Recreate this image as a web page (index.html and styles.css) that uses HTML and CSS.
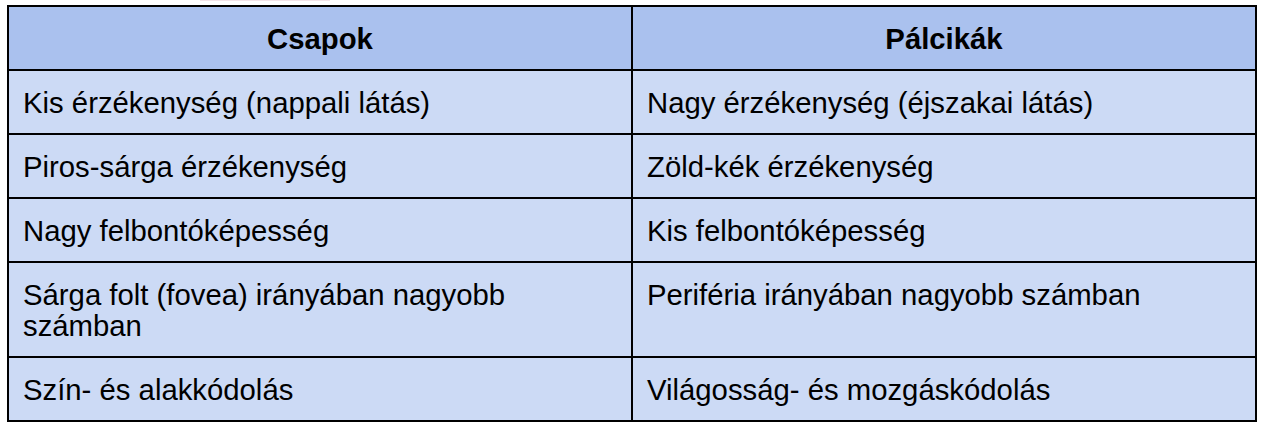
FILE: index.html
```html
<!DOCTYPE html>
<html lang="hu">
<head>
<meta charset="utf-8">
<link rel="stylesheet" href="styles.css">
</head>
<body>
<div class="topstrip"></div>
<table class="cmp">
  <thead>
    <tr><th>Csapok</th><th>Pálcikák</th></tr>
  </thead>
  <tbody>
    <tr><td>Kis érzékenység (nappali látás)</td><td>Nagy érzékenység (éjszakai látás)</td></tr>
    <tr><td>Piros-sárga érzékenység</td><td>Zöld-kék érzékenység</td></tr>
    <tr><td>Nagy felbontóképesség</td><td>Kis felbontóképesség</td></tr>
    <tr><td>Sárga folt (fovea) irányában nagyobb számban</td><td>Periféria irányában nagyobb számban</td></tr>
    <tr><td>Szín- és alakkódolás</td><td>Világosság- és mozgáskódolás</td></tr>
  </tbody>
</table>
</body>
</html>
```

FILE: styles.css
```css
html, body {
  margin: 0;
  padding: 0;
  background: #ffffff;
}
body {
  font-family: "Liberation Sans", Arial, sans-serif;
  color: #000;
}
.topstrip {
  margin-left: 200px;
  width: 130px;
  height: 1px;
  background: #f3e3e8;
}
.cmp {
  margin: 4px 0 0 7px;
  width: 1250px;
  table-layout: fixed;
  border-collapse: separate;
  border-spacing: 2px;
  background: #000;
}
.cmp th,
.cmp td {
  padding: 16px 14px 15px;
  font-size: 29.3px;
  line-height: 31px;
  vertical-align: top;
  text-align: left;
  font-weight: normal;
}
.cmp th {
  background: #aac1ee;
  font-weight: bold;
  text-align: center;
}
.cmp td {
  background: #ccdaf5;
}
```
